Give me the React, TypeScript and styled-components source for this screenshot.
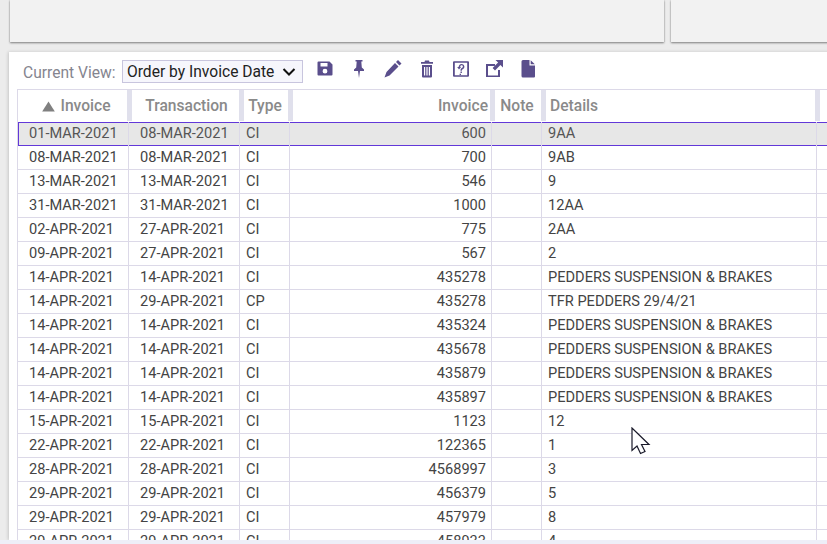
import React from "react";
import styled, { createGlobalStyle } from "styled-components";

const Global = createGlobalStyle`
  html, body { margin: 0; padding: 0; width: 827px; height: 544px; overflow: hidden; background: #ececec; }
  #root { width: 827px; height: 544px; overflow: hidden; }
  * { box-sizing: border-box; }
`;

const Page = styled.div`
  width: 827px; height: 544px; display: flex; flex-direction: column;
  font-family: Roboto, "Liberation Sans", sans-serif; overflow: hidden;
`;
const TopBar = styled.div`
  display: flex; gap: 7px; height: 52px; flex: none; padding: 0 0 10px 10px; width: 1000px;
`;
const TopCard = styled.div<{ $w: number }>`
  width: ${p => p.$w}px; height: 42px; background: #f2f2f2;
  box-shadow: 0 1px 2px rgba(0,0,0,.45), 0 0 1px rgba(0,0,0,.2);
`;
const Panel = styled.div`
  margin-left: 9px; width: 900px; height: 488px; flex: none; background: #fff;
  padding: 0 0 0 8px; display: flex; flex-direction: column; overflow: hidden;
  box-shadow: -1px 0 3px rgba(0,0,0,.16);
`;
const Footer = styled.div`
  flex: 1; background: #eeeef8;
`;
const Toolbar = styled.div`
  height: 37px; flex: none; display: flex; align-items: flex-start; padding: 8px 0 0 6px;
`;
const ViewLabel = styled.span`
  font-size: 15.6px; line-height: 20px; color: #85858f; width: 99px; flex: none; padding-top: 3px;
`;
const ViewSelect = styled.div`
  width: 181px; height: 23px; flex: none; display: flex; align-items: center; justify-content: space-between;
  border: 1px solid #c8c5de; background: #f6f6fc; color: #222;
  font-size: 15.6px; padding: 0 6px 0 4px;
`;
const Icons = styled.div`
  display: flex; align-items: center; margin: 0 0 0 5px; height: 18px;
`;
const IconSlot = styled.span`
  width: 33.9px; height: 18px; display: flex; align-items: center; justify-content: center; color: #5a4e8c;
`;
const Grid = styled.div`
  border-top: 1px solid #dcd9e8; flex: 1; overflow: hidden; width: 880px; border-left: 1px solid #dcd9e8;
`;
const HeadRow = styled.div`
  display: flex; height: 32px; align-items: stretch;
`;
const HeadCell = styled.div<{ $w: number; $align: string; $pl?: number; $pr?: number }>`
  width: ${p => p.$w}px; flex: none; display: flex; align-items: center;
  justify-content: ${p => p.$align}; color: #8a8a8a; font-size: 15.6px; font-weight: 500;
  padding: 0 ${p => p.$pr ?? 0}px 0 ${p => p.$pl ?? 0}px;
  gap: 5px;
`;
const Handle = styled.div`
  width: 5px; flex: none; background: #e0e0ec; height: 31px;
`;
const Row = styled.div<{ $sel?: boolean }>`
  height: 24px; display: flex;
  background: ${p => (p.$sel ? "#e7e7e7" : "#fff")};
  color: ${p => (p.$sel ? "#555" : "#444")};
  box-shadow: ${p => (p.$sel ? "inset 0 0 0 1px #6238d8" : "inset 0 -1px 0 #dcd9e8")};
`;
const Cell = styled.div<{ $w: number; $right?: boolean; $pad?: number }>`
  width: ${p => p.$w}px; flex: none; font-size: 14.6px; line-height: 22px;
  text-align: ${p => (p.$right ? "right" : "left")};
  padding: 0 ${p => (p.$right ? 5 : 0)}px 0 ${p => (p.$right ? 0 : p.$pad ?? 6)}px;
  border-right: 1px solid #dcd9e8; white-space: nowrap; overflow: hidden;
`;
const Pointer = styled.svg`
  position: absolute; left: 631px; top: 427px;
`;

const rows: [string, string, string, string, string][] = [
  ["01-MAR-2021", "08-MAR-2021", "CI", "600", "9AA"],
  ["08-MAR-2021", "08-MAR-2021", "CI", "700", "9AB"],
  ["13-MAR-2021", "13-MAR-2021", "CI", "546", "9"],
  ["31-MAR-2021", "31-MAR-2021", "CI", "1000", "12AA"],
  ["02-APR-2021", "27-APR-2021", "CI", "775", "2AA"],
  ["09-APR-2021", "27-APR-2021", "CI", "567", "2"],
  ["14-APR-2021", "14-APR-2021", "CI", "435278", "PEDDERS SUSPENSION & BRAKES"],
  ["14-APR-2021", "29-APR-2021", "CP", "435278", "TFR PEDDERS 29/4/21"],
  ["14-APR-2021", "14-APR-2021", "CI", "435324", "PEDDERS SUSPENSION & BRAKES"],
  ["14-APR-2021", "14-APR-2021", "CI", "435678", "PEDDERS SUSPENSION & BRAKES"],
  ["14-APR-2021", "14-APR-2021", "CI", "435879", "PEDDERS SUSPENSION & BRAKES"],
  ["14-APR-2021", "14-APR-2021", "CI", "435897", "PEDDERS SUSPENSION & BRAKES"],
  ["15-APR-2021", "15-APR-2021", "CI", "1123", "12"],
  ["22-APR-2021", "22-APR-2021", "CI", "122365", "1"],
  ["28-APR-2021", "28-APR-2021", "CI", "4568997", "3"],
  ["29-APR-2021", "29-APR-2021", "CI", "456379", "5"],
  ["29-APR-2021", "29-APR-2021", "CI", "457979", "8"],
  ["29-APR-2021", "29-APR-2021", "CI", "458933", "4"],
];

const icon = (d: string) => (
  <svg width="18" height="18" viewBox="0 0 18 18" fill="currentColor"><path fillRule="evenodd" d={d} /></svg>
);
const icons = [
  "M1.500 1.500h12l3 3v10a1 1 0 0 1-1 1h-13a1 1 0 0 1-1-1v-12a1 1 0 0 1 1-1zM4.500 3v3.500h7V3h-7zM9 8.800a2.400 2.400 0 1 0 0 4.800 2.400 2.400 0 0 0 0-4.800z",
  "M5.500 0h7v1.500h-1.200l.5 6 2.200 2V11H10l-1 7-1-7H4V9.500l2.200-2 .5-6H5.500V0z",
  "M14 0l3.500 3.500-2 2L12 2l2-2zM11 3l3.500 3.500-9 9L.5 17.500l2-5.500 8.500-9z",
  "M7 .500h4l.5 1.500H15v1.800H3V2h3.500L7 .500zM4 5h10v11.500a1 1 0 0 1-1 1H5a1 1 0 0 1-1-1V5zm2 2v8.500h1.200V7H6zm2.400 0v8.500h1.200V7H8.400zm2.400 0v8.500H12V7h-1.200z",
  "M2 1.200h14a1 1 0 0 1 1 1v13.600a1 1 0 0 1-1 1H2a1 1 0 0 1-1-1V2.200a1 1 0 0 1 1-1zm.8 1.600v12.400h12.400V2.800H2.800zM6.600 7C6.900 5.100 8 4 9.500 4c1.700 0 2.900 1.200 2.900 2.800 0 1.200-.7 2.100-1.700 2.500-.5.200-.8.500-.8 1v.4H8.500v-.6c0-1.100.6-1.800 1.500-2.200.6-.3.900-.8.900-1.300 0-.8-.6-1.300-1.400-1.300-.7 0-1.200.5-1.400 1.500l1 .1L7 9.600 5.200 6.900l1.400.1zM8.500 11.600h1.400V13H8.500v-1.400zM7.600 13.800H9v1.200H7.600v-1.200z",
  "M1 4h9v2H3v9.500h10V10h2v7H1V4zM10.500 0H18v7.500l-2.600-2.600-5.400 5.500-2.400-2.400 5.500-5.400L10.500 0z",
  "M4 0h6.500v5.500H16v11a1 1 0 0 1-1 1H4a1.500 1.500 0 0 1-1.500-1.500V1.500A1.500 1.500 0 0 1 4 0zM11.700.3L15.800 4.300h-4.100V.3z",
];

export default function App() {
  return (
    <Page>
      <Global />
      <TopBar>
        <TopCard $w={654} />
        <TopCard $w={300} />
      </TopBar>
      <Panel>
        <Toolbar>
          <ViewLabel>Current View:</ViewLabel>
          <ViewSelect>
            Order by Invoice Date
            <svg width="14" height="10" viewBox="0 0 14 10" fill="none" stroke="#111" strokeWidth="2"><path d="M1.500 2l5.500 5.500L12.500 2" /></svg>
          </ViewSelect>
          <Icons>
            {icons.map((d, i) => <IconSlot key={i}>{icon(d)}</IconSlot>)}
          </Icons>
        </Toolbar>
        <Grid>
          <HeadRow>
            <HeadCell $w={109} $align="center" $pl={8}>
              <svg width="13" height="11" viewBox="0 0 13 11" fill="#808080"><path d="M6.500 0.500L12.800 10.500H0.200z" /></svg>
              Invoice
            </HeadCell>
            <Handle />
            <HeadCell $w={107} $align="center" $pl={2}>Transaction</HeadCell>
            <Handle />
            <HeadCell $w={44} $align="center" $pr={2}>Type</HeadCell>
            <Handle />
            <HeadCell $w={197} $align="flex-end" $pr={2}>Invoice</HeadCell>
            <Handle />
            <HeadCell $w={46} $align="center" $pr={2}>Note</HeadCell>
            <Handle />
            <HeadCell $w={269} $align="flex-start" $pl={4}>Details</HeadCell>
            <Handle />
          </HeadRow>
          {rows.map((r, i) => (
            <Row key={i} $sel={i === 0}>
              <Cell $w={111} $pad={11}>{r[0]}</Cell>
              <Cell $w={111} $pad={11}>{r[1]}</Cell>
              <Cell $w={50}>{r[2]}</Cell>
              <Cell $w={202} $right>{r[3]}</Cell>
              <Cell $w={50} />
              <Cell $w={275}>{r[4]}</Cell>
            </Row>
          ))}
        </Grid>
      </Panel>
      <Footer />
      <Pointer width="24" height="32" viewBox="0 0 24 32">
        <path d="M1 1v22.500l5-4.500 3.500 7.500 4.500-2-3.500-7h7.500z" fill="#fff" stroke="#1a1a2a" strokeWidth="1.200" />
      </Pointer>
    </Page>
  );
}
